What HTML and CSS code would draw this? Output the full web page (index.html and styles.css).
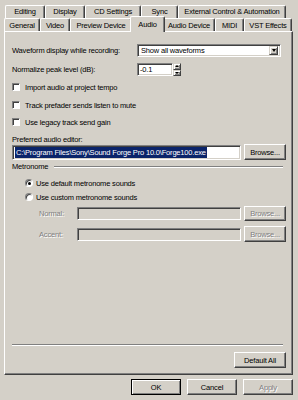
FILE: index.html
```html
<!DOCTYPE html>
<html lang="en">
<head>
    <meta charset="UTF-8">
    <meta name="viewport" content="width=device-width, initial-scale=1.0">
    <title>Preferences - Audio</title>
    <link rel="stylesheet" href="styles.css">
</head>
<body>
    <div class="dialog">
        <div class="tabrow back">
            <div class="tab t-editing">Editing</div>
            <div class="tab t-display">Display</div>
            <div class="tab t-cd">CD Settings</div>
            <div class="tab t-sync">Sync</div>
            <div class="tab t-ext">External Control &amp; Automation</div>
        </div>
        <div class="tabrow front">
            <div class="tab t-general">General</div>
            <div class="tab t-video">Video</div>
            <div class="tab t-preview">Preview Device</div>
            <div class="tab t-audio active">Audio</div>
            <div class="tab t-device">Audio Device</div>
            <div class="tab t-midi">MIDI</div>
            <div class="tab t-vst">VST Effects</div>
        </div>

        <div class="panel">
            <div class="content">
                <div class="row r-wave">
                    <span class="field-label">Waveform display while recording:</span>
                    <div class="select">
                        <span class="select-text">Show all waveforms</span>
                        <span class="drop-btn"><span class="arrow-down"></span></span>
                    </div>
                </div>
                <div class="row r-norm">
                    <span class="field-label">Normalize peak level (dB):</span>
                    <div class="edit spin-edit">-0.1</div>
                    <div class="spin">
                        <span class="spin-btn"><span class="arrow-up small"></span></span>
                        <span class="spin-btn"><span class="arrow-down small"></span></span>
                    </div>
                </div>

                <div class="row check-row r-c1"><span class="check"></span>Import audio at project tempo</div>
                <div class="row check-row r-c2"><span class="check"></span>Track prefader sends listen to mute</div>
                <div class="row check-row r-c3"><span class="check"></span>Use legacy track send gain</div>

                <div class="row r-pref">Preferred audio editor:</div>
                <div class="row r-editor">
                    <div class="edit wide"><span class="sel">C:\Program Files\Sony\Sound Forge Pro 10.0\Forge100.exe</span></div>
                    <div class="btn browse">Browse...</div>
                </div>

                <div class="row group r-metro">
                    <span>Metronome</span>
                    <span class="etch"></span>
                </div>
                <div class="row radio-row r-rad1"><span class="radio on"></span>Use default metronome sounds</div>
                <div class="row radio-row r-rad2"><span class="radio"></span>Use custom metronome sounds</div>

                <div class="row sound-row r-normal">
                    <span class="sound-label disabled">Normal:</span>
                    <div class="edit off"></div>
                    <div class="btn browse disabled">Browse...</div>
                </div>
                <div class="row sound-row r-accent">
                    <span class="sound-label disabled">Accent:</span>
                    <div class="edit off"></div>
                    <div class="btn browse disabled">Browse...</div>
                </div>

                <div class="etch bottom-sep"></div>
                <div class="row r-default">
                    <div class="btn default-all">Default All</div>
                </div>
            </div>
        </div>

        <div class="buttons">
            <div class="btn dlg-btn ok">OK</div>
            <div class="btn dlg-btn">Cancel</div>
            <div class="btn dlg-btn disabled">Apply</div>
        </div>
    </div>
</body>
</html>
```

FILE: styles.css
```css
body {
    margin: 0;
    padding: 0;
    background: #d4d0c8;
    font-family: "Liberation Sans", Arial, sans-serif;
    font-size: 7.5px;
    letter-spacing: -0.18px;
    color: #000;
}
.dialog {
    width: 298px;
    height: 400px;
    padding-top: 6px;
    box-sizing: border-box;
}

/* tabs */
.tabrow {
    display: flex;
    align-items: flex-end;
}
.tabrow.back {
    margin-left: 5px;
    height: 12px;
}
.tabrow.front {
    margin-left: 4px;
    height: 13px;
}
.tab {
    box-sizing: border-box;
    height: 100%;
    border-top: 1px solid #fff;
    border-left: 1px solid #fff;
    border-right: 1px solid #404040;
    border-radius: 2px 2px 0 0;
    box-shadow: inset -1px 0 #808080;
    background: #d4d0c8;
    display: flex;
    align-items: center;
    justify-content: center;
    white-space: nowrap;
    padding-top: 1px;
}
.back .tab {
    height: 13px;
    align-items: flex-start;
    padding-top: 1px;
}
.tab.active {
    position: relative;
    z-index: 1;
    height: 16px;
    margin: 0 -2px -1px;
    padding-bottom: 2px;
}
.t-editing { width: 40px; }
.t-display { width: 40px; }
.t-cd { width: 56px; }
.t-sync { width: 37px; }
.t-ext { width: 108px; }
.t-general { width: 36px; }
.t-video { width: 30px; }
.t-preview { width: 62px; }
.t-audio { width: 35px; }
.t-device { width: 52px; }
.t-midi { width: 29px; }
.t-vst { width: 48px; }

/* page panel */
.panel {
    margin-left: 4px;
    width: 289px;
    height: 344px;
    box-sizing: border-box;
    border-top: 1px solid #fff;
    border-left: 1px solid #fff;
    border-right: 1px solid #404040;
    border-bottom: 1px solid #404040;
    box-shadow: inset -1px -1px #808080;
}
.content {
    height: 100%;
    box-sizing: border-box;
    padding: 6px 6px 6px 7px;
    display: flex;
    flex-direction: column;
}
.row {
    display: flex;
    align-items: center;
    white-space: nowrap;
}
.field-label {
    width: 125px;
}

/* sunken fields */
.edit, .select {
    box-sizing: border-box;
    background: #fff;
    border-top: 1px solid #808080;
    border-left: 1px solid #808080;
    border-right: 1px solid #fff;
    border-bottom: 1px solid #fff;
    box-shadow: inset 1px 1px #404040, inset -1px -1px #d4d0c8;
    display: flex;
    align-items: center;
    padding-left: 2px;
}
.edit.off {
    background: #d4d0c8;
}
.select {
    width: 144px;
    height: 13px;
    justify-content: space-between;
    padding: 2px;
}
.select-text {
    padding-left: 1px;
}
.drop-btn, .spin-btn {
    box-sizing: border-box;
    background: #d4d0c8;
    border-top: 1px solid #d4d0c8;
    border-left: 1px solid #d4d0c8;
    border-right: 1px solid #404040;
    border-bottom: 1px solid #404040;
    box-shadow: inset 1px 1px #fff, inset -1px -1px #808080;
    display: flex;
    align-items: center;
    justify-content: center;
}
.drop-btn {
    width: 9px;
    height: 9px;
}
.arrow-down {
    width: 0;
    height: 0;
    border-left: 2.5px solid transparent;
    border-right: 2.5px solid transparent;
    border-top: 3px solid #000;
}
.arrow-up {
    width: 0;
    height: 0;
    border-left: 2px solid transparent;
    border-right: 2px solid transparent;
    border-bottom: 2px solid #000;
}
.arrow-down.small {
    border-left-width: 2px;
    border-right-width: 2px;
    border-top-width: 2px;
}

.r-wave { margin-top: 6px; height: 13px; }
.r-norm { margin-top: 6px; height: 13px; }
.spin-edit {
    width: 36px;
    height: 13px;
}
.spin {
    width: 8px;
    height: 13px;
    display: flex;
    flex-direction: column;
}
.spin-btn {
    height: 6.5px;
    width: 8px;
}

/* checkboxes */
.check-row { height: 12px; }
.r-c1 { margin-top: 5px; }
.r-c2 { margin-top: 6px; }
.r-c3 { margin-top: 5px; }
.check {
    box-sizing: border-box;
    width: 8px;
    height: 8px;
    margin-right: 5px;
    background: #fff;
    border-top: 1px solid #808080;
    border-left: 1px solid #808080;
    border-right: 1px solid #fff;
    border-bottom: 1px solid #fff;
    box-shadow: inset 1px 1px #404040;
}

.r-pref { margin-top: 6px; height: 10px; }
.r-editor { height: 16px; }
.edit.wide {
    width: 229px;
    height: 15px;
    overflow: hidden;
}
.sel {
    background: #0a246a;
    color: #fff;
    padding: 1px 1px;
}

/* buttons */
.btn {
    box-sizing: border-box;
    background: #d4d0c8;
    border-top: 1px solid #fff;
    border-left: 1px solid #fff;
    border-right: 1px solid #404040;
    border-bottom: 1px solid #404040;
    box-shadow: inset -1px -1px #808080;
    display: flex;
    align-items: center;
    justify-content: center;
}
.browse {
    width: 42px;
    height: 16px;
    margin-left: 3px;
}
.disabled {
    color: #808080;
    text-shadow: 1px 1px #fff;
}

/* metronome group */
.r-metro { margin-top: 1px; height: 11px; }
.etch {
    flex: 1;
    height: 0;
    margin-left: 6px;
    margin-right: 3px;
    border-top: 1px solid #808080;
    border-bottom: 1px solid #fff;
}
.radio-row {
    height: 12px;
    padding-left: 13px;
}
.r-rad1 { margin-top: 5px; }
.r-rad2 { margin-top: 2px; }
.radio {
    box-sizing: border-box;
    width: 8px;
    height: 8px;
    margin-right: 3px;
    border-radius: 50%;
    background: #fff;
    border-top: 1px solid #808080;
    border-left: 1px solid #808080;
    border-right: 1px solid #fff;
    border-bottom: 1px solid #fff;
    box-shadow: inset 1px 1px #404040;
    display: flex;
    align-items: center;
    justify-content: center;
}
.radio.on::after {
    content: "";
    width: 3px;
    height: 3px;
    margin: 1px 0 0 1px;
    border-radius: 50%;
    background: #000;
}
.sound-row { padding-left: 27px; }
.sound-label { width: 38px; }
.sound-row .edit {
    width: 164px;
    height: 13px;
}
.r-normal { margin-top: 3px; height: 15px; }
.r-normal .browse { height: 15px; }
.r-accent { margin-top: 5px; height: 16px; }

.bottom-sep {
    flex: none;
    margin: auto 3px 0 0;
}
.r-default {
    margin-top: 6px;
    justify-content: flex-end;
}
.default-all {
    width: 52px;
    height: 16px;
}

/* dialog buttons */
.buttons {
    display: flex;
    justify-content: flex-end;
    gap: 6px;
    margin-top: 4px;
    padding-right: 5px;
}
.dlg-btn {
    width: 50px;
    height: 16px;
}
.ok {
    border: 1px solid #000;
    box-shadow: inset 1px 1px #fff, inset -1px -1px #808080;
}
```
